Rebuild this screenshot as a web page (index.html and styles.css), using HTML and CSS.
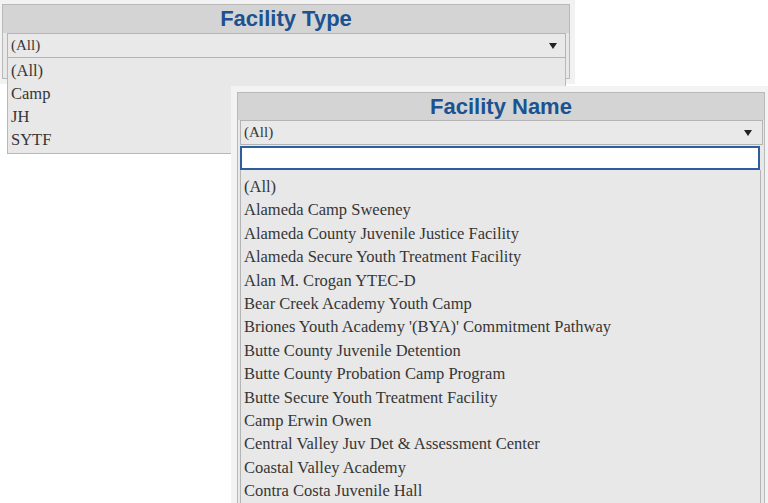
FILE: index.html
```html
<!DOCTYPE html>
<html lang="en">
<head>
  <meta charset="UTF-8" />
  <meta name="viewport" content="width=device-width, initial-scale=1.0"/>
  <title>Facility Filters</title>
  <link rel="stylesheet" href="styles.css">
</head>
<body>
  <div class="page">
    <!-- Facility Type filter, list open -->
    <section class="filter filter-type">
      <h2 class="filter-title">Facility Type</h2>
      <div class="select">
        <span>(All)</span>
        <i class="caret"></i>
      </div>
      <ul class="options">
        <li>(All)</li>
        <li>Camp</li>
        <li>JH</li>
        <li>SYTF</li>
      </ul>
    </section>

    <!-- Facility Name filter, list open with search -->
    <section class="filter filter-name">
      <h2 class="filter-title">Facility Name</h2>
      <div class="select">
        <span>(All)</span>
        <i class="caret"></i>
      </div>
      <input type="text" class="search" aria-label="Search facilities">
      <ul class="options">
        <li>(All)</li>
        <li>Alameda Camp Sweeney</li>
        <li>Alameda County Juvenile Justice Facility</li>
        <li>Alameda Secure Youth Treatment Facility</li>
        <li>Alan M. Crogan YTEC-D</li>
        <li>Bear Creek Academy Youth Camp</li>
        <li>Briones Youth Academy '(BYA)' Commitment Pathway</li>
        <li>Butte County Juvenile Detention</li>
        <li>Butte County Probation Camp Program</li>
        <li>Butte Secure Youth Treatment Facility</li>
        <li>Camp Erwin Owen</li>
        <li>Central Valley Juv Det &amp; Assessment Center</li>
        <li>Coastal Valley Academy</li>
        <li>Contra Costa Juvenile Hall</li>
      </ul>
    </section>
  </div>
</body>
</html>
```

FILE: styles.css
```css
body {
  margin: 0;
  background: #fff;
  font-family: "Liberation Serif", "Times New Roman", serif;
  color: #363636;
}

.page {
  position: relative;
  height: 503px;
  overflow: hidden;
  padding: 4px 0 0 2px;
  box-sizing: border-box;
}

.filter {
  background: #e8e8e8;
  border: 1px solid #b9b9b9;
}

.filter-title {
  margin: 0;
  background: #d4d4d4;
  color: #1d5290;
  font-family: "Liberation Sans", Arial, sans-serif;
  font-weight: bold;
  font-size: 22px;
  text-align: center;
}

.select {
  display: flex;
  align-items: center;
  justify-content: space-between;
  box-sizing: border-box;
  height: 25px;
  padding: 0 8px 0 3px;
  background: #e9e9e9;
  border: 1px solid #b4b4b4;
  font-size: 15px;
}

.caret {
  width: 0;
  height: 0;
  border-left: 4px solid transparent;
  border-right: 4px solid transparent;
  border-top: 6px solid #222;
}

.options {
  list-style: none;
  margin: 0;
  padding: 0;
  background: #e8e8e8;
  font-size: 16.5px;
}

.options li {
  padding-left: 3px;
  white-space: nowrap;
}

/* Facility Type */
.filter-type {
  position: relative;
  width: 566px;
  padding-bottom: 20px;
  box-shadow: 0 0 0 5px #f2f2f2;
}

.filter-type .filter-title {
  height: 28px;
  line-height: 28px;
}

.filter-type .select {
  margin: 0 3px 0 4px;
}

.filter-type .options {
  position: absolute;
  top: 53px;
  left: 4px;
  right: 3px;
  padding: 1px 0 2px;
  border: 1px solid #b8b8b8;
  border-top: none;
}

.filter-type .options li {
  line-height: 23px;
}

/* Facility Name */
.filter-name {
  position: absolute;
  top: 92px;
  left: 237px;
  width: 526px;
  height: 430px;
  box-shadow: 0 0 0 6px #f3f3f3;
}

.filter-name .filter-title {
  height: 27px;
  line-height: 27px;
}

.filter-name .select {
  margin: 0 1px 0 2px;
  padding-right: 10px;
}

.search {
  display: block;
  box-sizing: border-box;
  width: 520px;
  height: 24px;
  margin: 1px 0 0 2px;
  border: 2px solid #2c5e9c;
  background: #fff;
  outline: none;
}

.filter-name .options {
  margin: 0 3px 0 2px;
  padding-top: 5px;
  border-left: 1px solid #b5b5b5;
  border-right: 1px solid #b5b5b5;
}

.filter-name .options li {
  line-height: 23.4px;
}
```
